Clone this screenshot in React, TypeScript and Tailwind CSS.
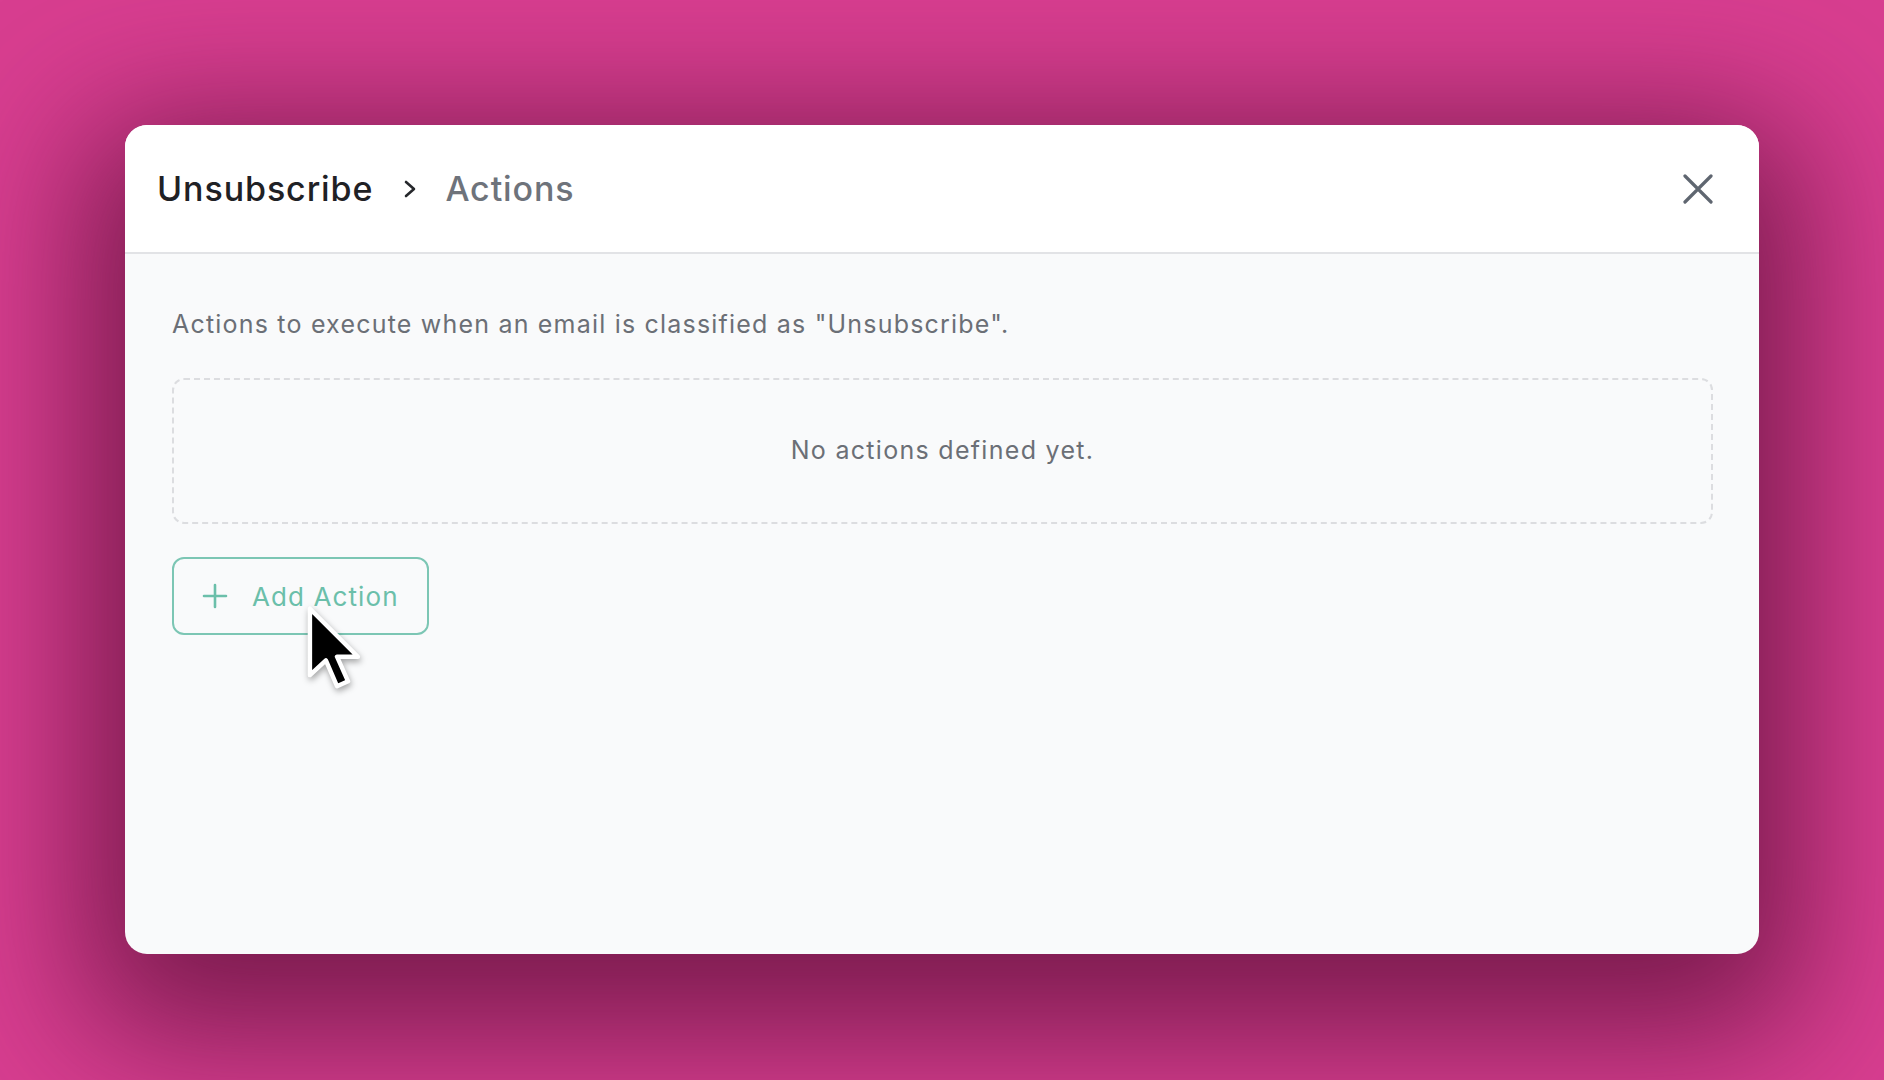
import React from 'react';

function CloseIcon() {
  return (
    <svg width="30" height="30" viewBox="0 0 30 30" fill="none">
      <path d="M2 2 L28 28 M28 2 L2 28" stroke="#5f6670" strokeWidth="3.2" strokeLinecap="round" />
    </svg>
  );
}

function PlusIcon() {
  return (
    <svg width="26" height="26" viewBox="0 0 26 26" fill="none">
      <path d="M13 2 V24 M2 13 H24" stroke="#6bbfaa" strokeWidth="2.6" strokeLinecap="round" />
    </svg>
  );
}

function Cursor() {
  return (
    <svg width="64" height="100" viewBox="0 0 26 40" fill="none" style={{ filter: 'drop-shadow(1px 3px 3px rgba(0,0,0,0.35))' }}>
      <path
        d="M2 2 L2 29 L8.5 23 L13 33.5 L17.5 31.5 L13 21.5 L21.5 21.5 Z"
        fill="#000"
        stroke="#fff"
        strokeWidth="1.8"
        strokeLinejoin="round"
      />
    </svg>
  );
}

export default function App() {
  return (
    <div
      className="h-[1080px] w-full overflow-hidden bg-[#d83e90] pt-[125px] px-[125px]"
      style={{ fontFamily: 'Inter, "Noto Sans", sans-serif' }}
    >
      <div className="h-[829px] w-full rounded-[22px] overflow-hidden bg-[#f9fafb] flex flex-col shadow-[0_40px_140px_40px_rgba(90,15,55,0.75)]">
        {/* header */}
        <div className="h-[129px] shrink-0 bg-white border-b-2 border-[#e2e3e6] flex items-center justify-between pl-[32px] pr-[46px]">
          <div className="flex items-center text-[34px] leading-none font-medium tracking-[0.9px]">
            <span className="text-[#1f2125]">Unsubscribe</span>
            <svg className="ml-[30px] mr-[28px]" width="14" height="20" viewBox="0 0 14 20" fill="none">
              <path d="M3 3 L11 10 L3 17" stroke="#26282c" strokeWidth="2.6" strokeLinecap="round" strokeLinejoin="round" />
            </svg>
            <span className="text-[#6e737b]">Actions</span>
          </div>
          <CloseIcon />
        </div>

        {/* body */}
        <div className="flex-1 pt-[54px] pl-[47px] pr-[46px]">
          <p className="text-[25px] leading-[32px] tracking-[1.2px] text-[#6b6f76]">
            Actions to execute when an email is classified as "Unsubscribe".
          </p>

          <div className="mt-[38px] h-[146px] rounded-[12px] border-2 border-dashed border-[#dcdde0] flex items-center justify-center">
            <span className="text-[25px] tracking-[1.3px] text-[#6b6f76]">No actions defined yet.</span>
          </div>

          <div className="relative mt-[33px] w-fit">
            <button className="h-[78px] w-[257px] rounded-[12px] border-2 border-[#7cc6b4] bg-transparent flex items-center gap-[24px] pl-[28px] text-[26px] tracking-[1.1px] text-[#6bbfaa]">
              <PlusIcon />
              <span>Add Action</span>
            </button>
            <div className="absolute left-[133px] top-[46px]">
              <Cursor />
            </div>
          </div>
        </div>
      </div>
    </div>
  );
}
